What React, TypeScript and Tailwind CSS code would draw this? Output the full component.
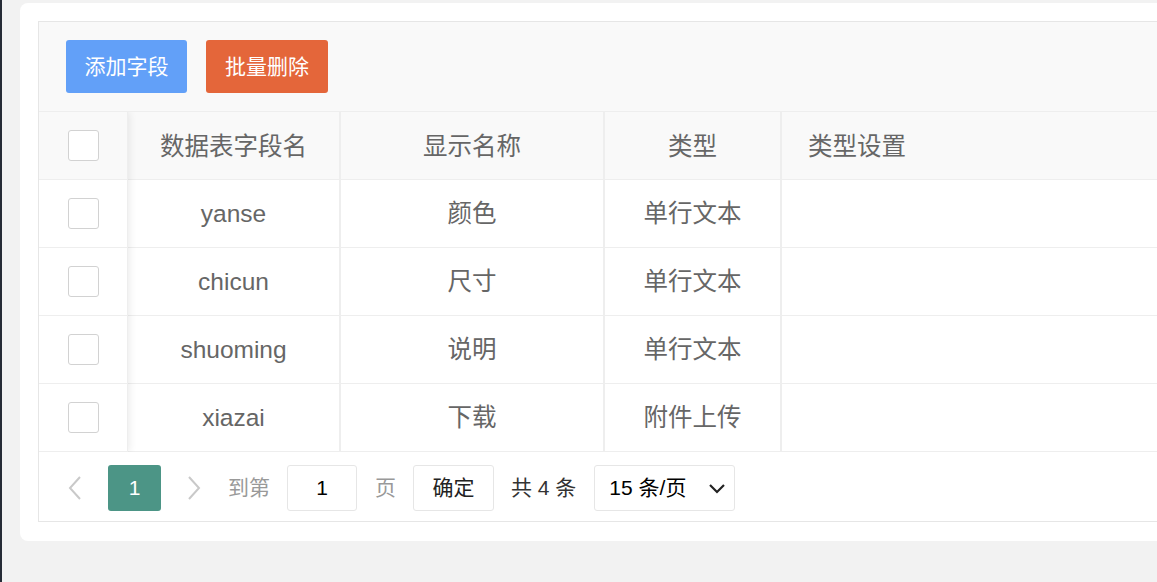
import React from "react";

const font = { fontFamily: '"Liberation Sans", Arial, "Noto Sans CJK SC", sans-serif' };

const rows = [
  { name: "yanse", label: "颜色", type: "单行文本" },
  { name: "chicun", label: "尺寸", type: "单行文本" },
  { name: "shuoming", label: "说明", type: "单行文本" },
  { name: "xiazai", label: "下载", type: "附件上传" },
];

function Checkbox() {
  return <div className="w-[31px] h-[31px] rounded-[3px] border border-[#d2d2d2] bg-white" />;
}

function Chevron({ dir }: { dir: "left" | "right" }) {
  return (
    <svg width="14" height="26" viewBox="0 0 14 26" fill="none">
      {dir === "left" ? (
        <polyline points="12,2 2,13 12,24" stroke="#c9c9c9" strokeWidth="2" />
      ) : (
        <polyline points="2,2 12,13 2,24" stroke="#c9c9c9" strokeWidth="2" />
      )}
    </svg>
  );
}

export default function App() {
  return (
    <div className="flex h-[582px] w-[1157px] overflow-hidden bg-[#f2f2f2]" style={font}>
      <div className="w-[2px] h-full bg-[#262b36] shrink-0" />
      <div className="flex-1 pl-[18px] pt-[3px] overflow-hidden">
        <div className="w-[1200px] rounded-[8px] bg-white pt-[18px] pl-[18px] pb-[19px]">
          <div className="border border-[#e6e6e6]">
            {/* toolbar */}
            <div className="h-[90px] bg-[#f9f9f9] border-b border-[#eeeeee] pt-[18px] pl-[27px] flex gap-[19px]">
              <div className="w-[121px] h-[53px] rounded-[3px] bg-[#62a0f8] text-white text-[21px] flex items-center justify-center">
                添加字段
              </div>
              <div className="w-[122px] h-[53px] rounded-[3px] bg-[#e4663a] text-white text-[21px] flex items-center justify-center">
                批量删除
              </div>
            </div>
            {/* table */}
            <div className="flex text-[24.5px] text-[#666666]">
              <div className="relative z-10 w-[89px] shrink-0 shadow-[1px_0_8px_rgba(0,0,0,0.09)] [clip-path:inset(0_-14px_0_0)]">
                <div className="h-[68px] bg-[#f9f9f9] border-b border-r border-[#eeeeee] flex items-center justify-center">
                  <Checkbox />
                </div>
                {rows.map((r) => (
                  <div key={r.name} className="h-[68px] bg-white border-b border-r border-[#eeeeee] flex items-center justify-center">
                    <Checkbox />
                  </div>
                ))}
              </div>
              <div className="flex-1">
                <div className="flex h-[68px] bg-[#f9f9f9] border-b border-[#eeeeee]">
                  <div className="w-[213px] pt-[3px] border-r-2 border-[#eeeeee] flex items-center justify-center">数据表字段名</div>
                  <div className="w-[264px] pt-[3px] border-r-2 border-[#eeeeee] flex items-center justify-center">显示名称</div>
                  <div className="w-[177px] pt-[3px] border-r-2 border-[#eeeeee] flex items-center justify-center">类型</div>
                  <div className="flex-1 pt-[3px] flex items-center pl-[26px]">类型设置</div>
                </div>
                {rows.map((r) => (
                  <div key={r.name} className="flex h-[68px] bg-white border-b border-[#eeeeee]">
                    <div className="w-[213px] pt-[2px] border-r-2 border-[#eeeeee] flex items-center justify-center">{r.name}</div>
                    <div className="w-[264px] pt-[2px] border-r-2 border-[#eeeeee] flex items-center justify-center">{r.label}</div>
                    <div className="w-[177px] pt-[2px] border-r-2 border-[#eeeeee] flex items-center justify-center">{r.type}</div>
                    <div className="flex-1" />
                  </div>
                ))}
              </div>
            </div>
            {/* pagination */}
            <div className="h-[69px] bg-white flex items-center pl-[29px] pt-[3px] text-[21px]">
              <Chevron dir="left" />
              <div className="ml-[26px] w-[53px] h-[46px] rounded-[3px] bg-[#4c9586] text-white flex items-center justify-center">1</div>
              <div className="ml-[26px]">
                <Chevron dir="right" />
              </div>
              <span className="ml-[27px] text-[#999999]">到第</span>
              <div className="ml-[17px] w-[70px] h-[46px] rounded-[3px] border border-[#e6e6e6] flex items-center justify-center text-black">1</div>
              <span className="ml-[18px] text-[#999999]">页</span>
              <div className="ml-[17px] w-[81px] h-[46px] rounded-[3px] border border-[#e6e6e6] flex items-center justify-center text-[#222222]">确定</div>
              <span className="ml-[17px] text-[#333333]">共 4 条</span>
              <div className="ml-[18px] w-[141px] h-[46px] rounded-[3px] border border-[#e6e6e6] flex items-center justify-between pl-[14px] pr-[8px] text-black">
                <span>15 条/页</span>
                <svg width="18" height="12" viewBox="0 0 18 12" fill="none">
                  <polyline points="2,3 9,10 16,3" stroke="#222222" strokeWidth="2.2" />
                </svg>
              </div>
            </div>
          </div>
        </div>
      </div>
    </div>
  );
}
